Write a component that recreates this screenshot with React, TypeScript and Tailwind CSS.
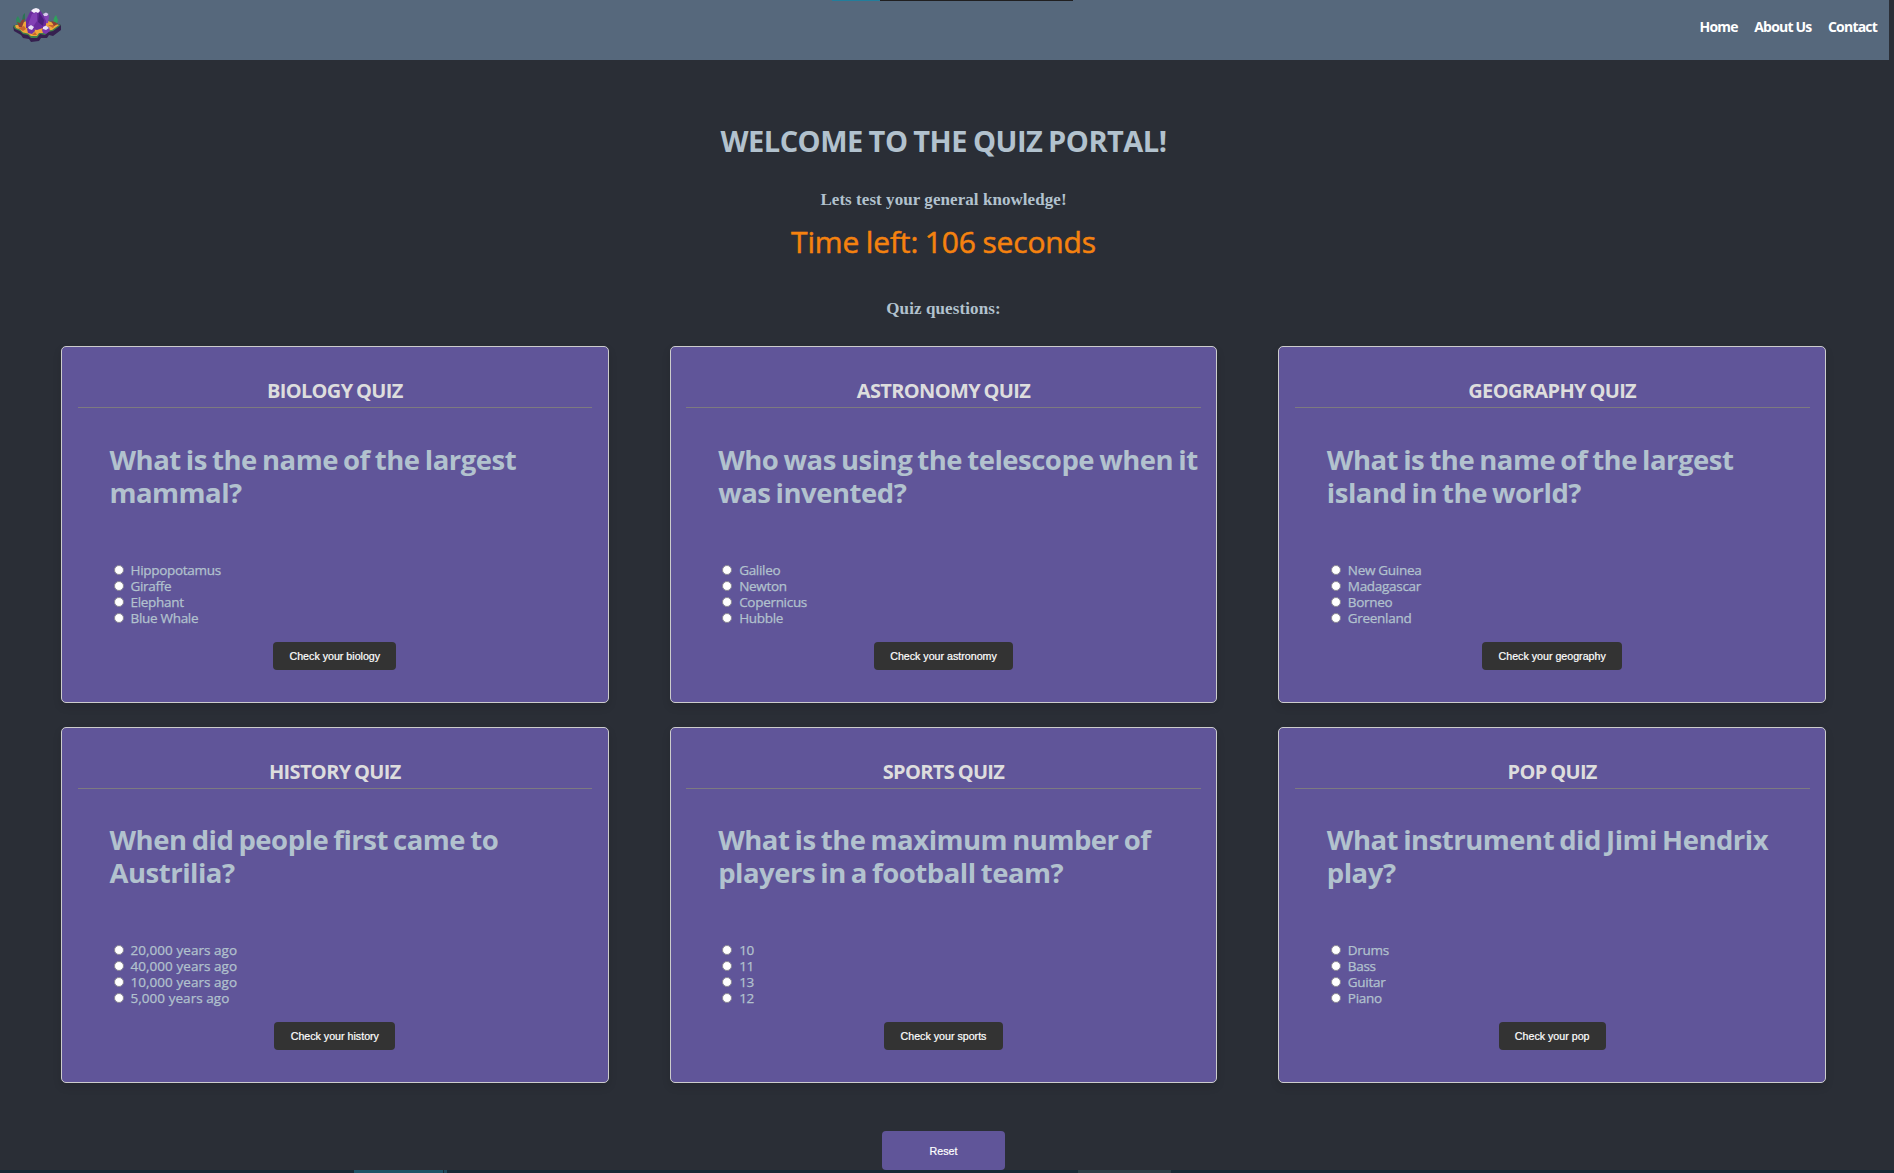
type Quiz = {
  subject: string;
  lines: string[];
  options: string[];
  optionTracking?: string;
};

const quizzes: Quiz[] = [
  {
    subject: "biology",
    lines: ["What is the name of the largest", "mammal?"],
    options: ["Hippopotamus", "Giraffe", "Elephant", "Blue Whale"],
  },
  {
    subject: "astronomy",
    lines: ["Who was using the telescope when it", "was invented?"],
    options: ["Galileo", "Newton", "Copernicus", "Hubble"],
  },
  {
    subject: "geography",
    lines: ["What is the name of the largest", "island in the world?"],
    options: ["New Guinea", "Madagascar", "Borneo", "Greenland"],
  },
  {
    subject: "history",
    lines: ["When did people first came to", "Austrilia?"],
    options: ["20,000 years ago", "40,000 years ago", "10,000 years ago", "5,000 years ago"],
    optionTracking: "tracking-[0.05px]",
  },
  {
    subject: "sports",
    lines: ["What is the maximum number of", "players in a football team?"],
    options: ["10", "11", "13", "12"],
  },
  {
    subject: "pop",
    lines: ["What instrument did Jimi Hendrix", "play?"],
    options: ["Drums", "Bass", "Guitar", "Piano"],
  },
];

function Logo() {
  return (
    <svg viewBox="0 0 48 34" className="h-[34px] w-[48px]" aria-hidden="true">
      <path d="M0 18 L8 15 L40 14 L48 17 V22 L40 28 L36 27 L34 30 L28 30 L26 33 L18 34 L16 31 L10 30 L8 27 L1 23Z" fill="#35204f" />
      <path d="M0 18 L24 9 L48 17 L40 23 L35 24 L32 27 L27 26 L24 30 L18 30 L15 27 L10 26 L7 23 L2 21Z" fill="#3f7f4a" />
      <path d="M2 17.500 L24 9 L46 17 L39 22 L34 22.500 L31 25 L26 25 L24 28 L18 28 L15 25.500 L10 24.500 L7 21.500 L3 20Z" fill="#f0a63a" />
      <path d="M5 20 L11 18 L13 21 L10 23Z M35 17 L42 17 L40 20Z M19 27 L22 24 L24 27Z" fill="#c9652f" />
      <path d="M4 17 L3 11 L5 8 L8 14 L8 17Z" fill="#2f8a5c" />
      <path d="M9 13 L10 7 L12 5 L12 12Z" fill="#2b7355" />
      <path d="M40 16 L41 10 L43 7 L45 12 L44 16Z" fill="#2fa35c" />
      <path d="M4 14 L6 19 L9 19 L12 11 L9 12 L7 15Z M38 13 L41 18 L45 16 L42 14Z" fill="#8c3f36" />
      <path d="M31 7 L34 5 L36 8 L35 15 L30 16Z" fill="#8444b4" />
      <path d="M30 6 L33 4.500 L35.500 6 L34 8 L31 8Z" fill="#d9c5ee" />
      <path d="M13 20 L13 12 L17 4 L20 1 L26 1 L29 5 L33 13 L33 19 L24 22Z" fill="#6a2b9e" />
      <path d="M19 6 L24 4 L24 13 L19 20 L15 17Z" fill="#8240b5" />
      <path d="M26 4 L31 12 L30 18 L25 14Z" fill="#4b1f7c" />
      <path d="M18 3 L20 1 L23 0 L26 1 L27 3 L25 5 L23 4 L21 5Z" fill="#f4effa" />
      <path d="M14 21 L17 17 L21 18 L22 23 L19 26 L15 25Z" fill="#7030a5" />
      <path d="M15 19 L18 17 L21 19 L19 22 L16 21Z" fill="#e9dff5" />
      <path d="M29 22 L31 18 L36 19 L37 23 L33 26 L30 25Z" fill="#7b37ae" />
      <path d="M30 19 L33 17.500 L36 20 L33 22 L30 21Z" fill="#e9dff5" />
    </svg>
  );
}

function QuizCard({ quiz }: { quiz: Quiz }) {
  return (
    <article className="flex flex-col justify-between rounded-[5px] border border-[#cccccc] bg-[#605599] px-[15.500px] pb-8 shadow-[0_4px_8px_rgba(0,0,0,0.12)]">
      <h2 className="mt-[30px] h-[31px] border-b border-[#7d7a80] text-center text-[20px] leading-[28px] font-bold tracking-[-0.65px] text-[#dddddd] uppercase [word-spacing:-1px]">
        {quiz.subject} quiz
      </h2>
      <div>
        <h3 className="pl-8 text-[27.500px] leading-[33px] font-bold tracking-[-0.5px] whitespace-nowrap text-[#b2c2ce] [word-spacing:-1.5px]">
          {quiz.lines.map((line) => (
            <span key={line} className="block">
              {line}
            </span>
          ))}
        </h3>
        <ul className="mt-[53px] pl-9">
          {quiz.options.map((option) => (
            <li key={option} className="flex h-4 items-center">
              <span className="mb-px size-[10px] rounded-full border border-[#8a8894] bg-white" />
              <span
                className={`ml-[7px] text-[13.500px] leading-4 text-[#b2c2ce] [-webkit-text-stroke:0.25px] ${quiz.optionTracking ?? "tracking-[-0.3px]"}`}
              >
                {option}
              </span>
            </li>
          ))}
        </ul>
        <div className="mt-4 flex justify-center">
          <button className="h-7 rounded bg-[#333333] px-[16.300px] font-['Liberation_Sans',sans-serif] text-[10.670px] text-white [-webkit-text-stroke:0.2px]">
            Check your {quiz.subject}
          </button>
        </div>
      </div>
    </article>
  );
}

export default function App() {
  return (
    <div className="flex h-[1173px] w-full flex-col overflow-hidden bg-[#2a2e36] font-['Open_Sans',sans-serif] text-[#b2c2ce]">
      <header className="relative flex h-[60px] w-[1889px] shrink-0 justify-between bg-[#56687c] pr-3 pl-[13px]">
        <div className="absolute top-0 left-[832px] flex h-px w-[241px]">
          <div className="w-12 bg-[#237d9b]" />
          <div className="flex-1 bg-[#201f20]" />
        </div>
        <div className="pt-2">
          <Logo />
        </div>
        <nav className="flex gap-[16.500px] pt-[17px] text-[14px] leading-5 font-bold tracking-[-0.8px] text-white">
          <a>Home</a>
          <a>About Us</a>
          <a>Contact</a>
        </nav>
      </header>

      <main className="flex w-[1887px] flex-1 flex-col items-center overflow-hidden">
        <h1 className="mt-[61px] text-[29px] leading-10 font-bold tracking-[-0.5px] [word-spacing:-1.2px]">
          WELCOME TO THE QUIZ PORTAL!
        </h1>
        <p className="mt-[29px] font-['Liberation_Serif',serif] text-[17px] leading-5 font-bold tracking-[0.06px]">
          Lets test your general knowledge!
        </p>
        <p className="mt-3 text-[30px] leading-10 tracking-[-0.15px] text-[#f5820f] [-webkit-text-stroke:0.5px] [word-spacing:-1px]">
          Time left: 106 seconds
        </p>
        <p className="mt-[37px] font-['Liberation_Serif',serif] text-[17px] leading-5 font-bold tracking-[0.1px]">
          Quiz questions:
        </p>

        <section className="mt-[27px] grid w-[1765px] shrink-0 grid-cols-3 grid-rows-[357px_356px] gap-x-[61px] gap-y-6">
          {quizzes.map((quiz) => (
            <QuizCard key={quiz.subject} quiz={quiz} />
          ))}
        </section>

        <button className="mt-12 h-[39px] w-[123px] shrink-0 rounded bg-[#605599] font-['Liberation_Sans',sans-serif] text-[10.670px] text-white [-webkit-text-stroke:0.2px]">
          Reset
        </button>
      </main>

      <footer className="flex h-[3px] shrink-0 bg-[#162a36]">
        <div className="ml-[354px] w-[89px] bg-[#1e5468]" />
        <div className="ml-px w-[3px] bg-[#1e4a5c]" />
        <div className="ml-[631px] w-[93px] bg-[#2b3f47]" />
      </footer>
    </div>
  );
}
